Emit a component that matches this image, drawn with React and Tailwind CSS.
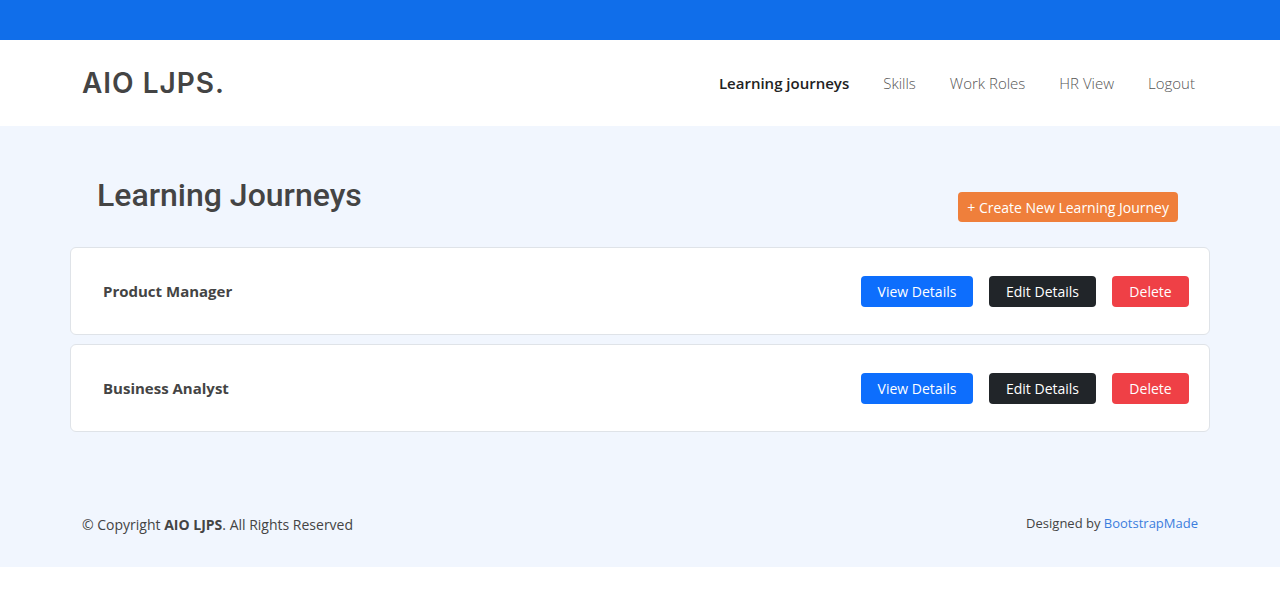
import React from "react";

const journeys = ["Product Manager", "Business Analyst"];

const navItems = ["Learning journeys", "Skills", "Work Roles", "HR View", "Logout"];

export default function App() {
  return (
    <div className="min-h-screen bg-white" style={{ fontFamily: "'Open Sans', sans-serif" }}>
      {/* top bar */}
      <div className="h-[40px] bg-[#106eea]" />

      {/* header */}
      <header className="h-[86px] bg-white">
        <div className="mx-auto flex h-full w-[1116px] items-center justify-between">
          <div
            className="text-[28px] font-semibold tracking-[1px] text-[#444444]"
            style={{ fontFamily: "Inter, sans-serif" }}
          >
            AIO LJPS.
          </div>
          <nav className="flex items-center gap-[34px] pr-[3px] text-[15px]">
            {navItems.map((item, i) => (
              <a
                key={item}
                className={
                  i === 0
                    ? "font-semibold text-[#222222]"
                    : "font-light text-[#555555]"
                }
              >
                {item}
              </a>
            ))}
          </nav>
        </div>
      </header>

      {/* main */}
      <main className="bg-[#f1f6fe]">
        <div className="mx-auto w-[1140px] pt-[45px]">
          <div className="flex h-[48px] items-start justify-between pl-[27px] pr-[32px]">
            <h1
              className="text-[32px] leading-[48px] font-medium text-[#444444]"
              style={{ fontFamily: "Roboto, sans-serif" }}
            >
              Learning Journeys
            </h1>
            <button className="mt-[21px] h-[30px] rounded-[4px] bg-[#ef7f3b] px-[9px] text-[14px] text-white">
              + Create New Learning Journey
            </button>
          </div>

          <div className="mt-[28px] flex flex-col gap-[9px]">
            {journeys.map((name) => (
              <div
                key={name}
                className="flex h-[88px] items-center justify-between rounded-[6px] border border-[#dfe3e8] bg-white pl-[32px] pr-[20px]"
              >
                <span className="text-[15px] font-bold text-[#444444]">{name}</span>
                <div className="flex gap-[16px] text-[14px] text-white">
                  <button className="h-[31px] w-[112px] rounded-[4px] bg-[#0d6efd]">
                    View Details
                  </button>
                  <button className="h-[31px] w-[107px] rounded-[4px] bg-[#212529]">
                    Edit Details
                  </button>
                  <button className="h-[31px] w-[77px] rounded-[4px] bg-[#ef4046]">
                    Delete
                  </button>
                </div>
              </div>
            ))}
          </div>
        </div>

        {/* footer */}
        <footer className="mx-auto flex h-[135px] w-[1116px] items-center justify-between pt-[82px] pb-[33px] text-[#444444]">
          <div className="text-[14px]">
            © Copyright <strong className="font-bold">AIO LJPS</strong>. All Rights Reserved
          </div>
          <div className="text-[13px]">
            Designed by <a className="text-[#3b7ddd]">BootstrapMade</a>
          </div>
        </footer>
      </main>
    </div>
  );
}
